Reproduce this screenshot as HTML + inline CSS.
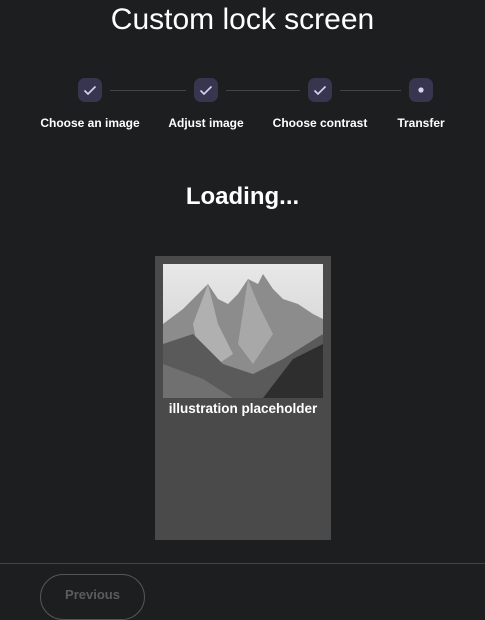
<!DOCTYPE html>
<html><head><style>
body{margin:0;width:485px;height:612px;background:#1d1e20;font-family:"Liberation Sans",sans-serif;color:#fff;position:relative;overflow:hidden}
.a{position:absolute}
h1{position:absolute;top:3px;left:0;width:485px;text-align:center;font-size:30px;font-weight:normal;margin:0}
.c{position:absolute;top:78px;width:24px;height:24px;border-radius:7px;background:#38364f}
.l{position:absolute;top:90px;height:1px;background:#444}
.t{position:absolute;top:116px;font-size:12px;font-weight:bold;white-space:nowrap;transform:translateX(-50%)}
</style></head><body>
<h1>Custom lock screen</h1>
<div class="l" style="left:110px;width:76px"></div>
<div class="l" style="left:226px;width:74px"></div>
<div class="l" style="left:340px;width:61px"></div>
<div class="c" style="left:78px"><svg width="24" height="24"><path d="M6.5 12.5l3.5 3.5 7.5-7.5" stroke="#d6d2f5" stroke-width="1.6" fill="none"/></svg></div>
<div class="c" style="left:194px"><svg width="24" height="24"><path d="M6.5 12.5l3.5 3.5 7.5-7.5" stroke="#d6d2f5" stroke-width="1.6" fill="none"/></svg></div>
<div class="c" style="left:308px"><svg width="24" height="24"><path d="M6.5 12.5l3.5 3.5 7.5-7.5" stroke="#d6d2f5" stroke-width="1.6" fill="none"/></svg></div>
<div class="c" style="left:409px"><svg width="24" height="24"><circle cx="12" cy="12" r="2.6" fill="#d6d2f5"/></svg></div>
<div class="t" style="left:90px">Choose an image</div>
<div class="t" style="left:206px">Adjust image</div>
<div class="t" style="left:320px">Choose contrast</div>
<div class="t" style="left:421px">Transfer</div>
<div class="a" style="top:183px;left:0;width:485px;text-align:center;font-size:24px;font-weight:bold">Loading...</div>
<div class="a" style="left:155px;top:256px;width:176px;height:284px;background:#4a4a4a"></div>
<svg class="a" style="left:163px;top:264px" width="160" height="134">
<defs><linearGradient id="s" x1="0" y1="0" x2="0" y2="1"><stop offset="0" stop-color="#e8e8e8"/><stop offset="1" stop-color="#c8c8c8"/></linearGradient></defs>
<rect width="160" height="134" fill="url(#s)"/>
<polygon points="0,60 20,45 35,30 45,20 55,35 65,40 75,30 85,15 95,20 100,10 110,25 120,35 135,40 150,50 160,55 160,134 0,134" fill="#8c8c8c"/>
<polygon points="30,60 45,20 55,60 70,90 40,110" fill="#b0b0b0"/>
<polygon points="85,15 95,40 110,70 90,100 75,80" fill="#a8a8a8"/>
<polygon points="0,80 30,70 60,100 90,110 120,95 160,70 160,134 0,134" fill="#5a5a5a"/>
<polygon points="100,134 130,95 160,80 160,134" fill="#2e2e2e"/>
<polygon points="0,100 40,115 70,134 0,134" fill="#707070"/>
</svg>
<div class="a" style="left:155px;width:176px;top:401px;text-align:center;font-size:13.5px;font-weight:bold">illustration placeholder</div>
<div class="a" style="left:0;top:563px;width:485px;height:1px;background:#444"></div>
<div class="a" style="left:40px;top:574px;width:103px;height:44px;border:1px solid #555;border-radius:23px;color:#5c5c5c;font-size:13px;font-weight:bold;text-align:center;line-height:40px">Previous</div>
</body></html>
